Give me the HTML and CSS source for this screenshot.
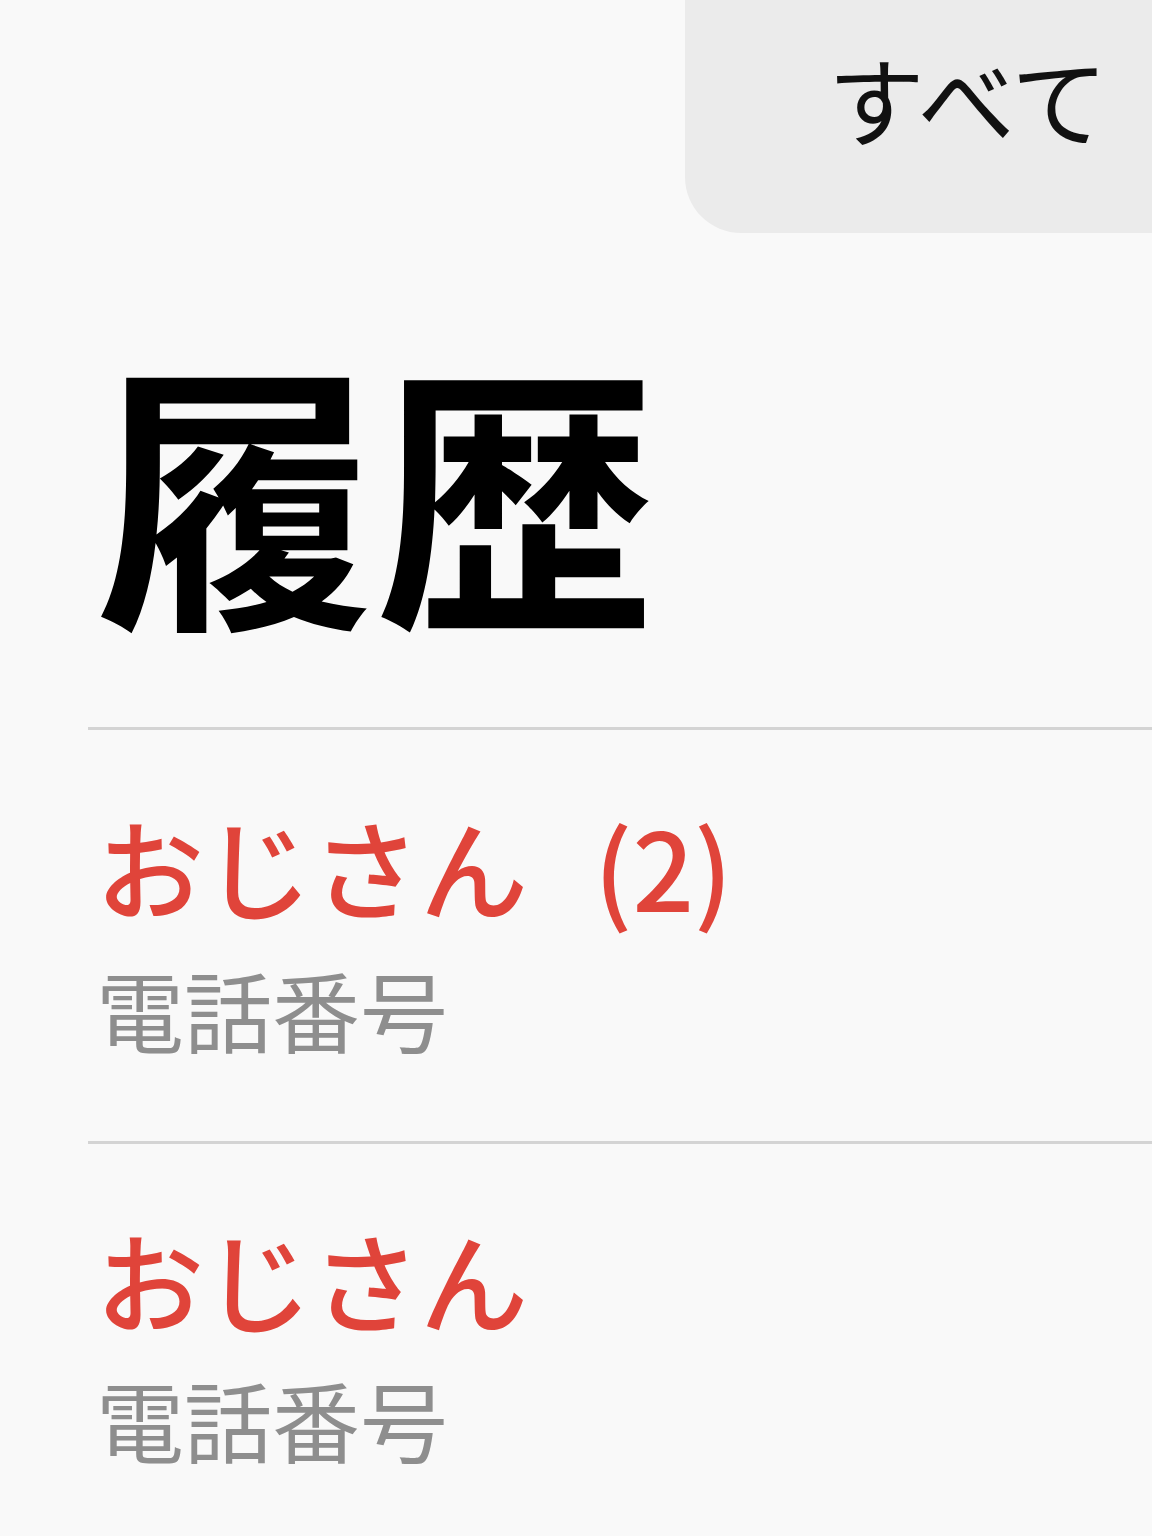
FILE: index.html
```html
<!DOCTYPE html>
<html lang="ja">
<head>
<meta charset="utf-8">
<link rel="stylesheet" href="styles.css">
</head>
<body>
<div class="topbar">
  <div class="filter">すべて</div>
</div>
<h1 class="title">履歴</h1>
<ul class="list">
  <li class="row">
    <div class="name">おじさん<span class="count">(2)</span></div>
    <div class="sub">電話番号</div>
  </li>
  <li class="row">
    <div class="name">おじさん</div>
    <div class="sub">電話番号</div>
  </li>
</ul>
</body>
</html>
```
FILE: styles.css
```css
html, body {
  margin: 0;
  padding: 0;
  background: #f9f9f9;
  font-family: "Noto Sans CJK JP", "Noto Sans", sans-serif;
}
.topbar {
  display: flex;
  justify-content: flex-end;
}
.filter {
  width: 467px;
  height: 233px;
  box-sizing: border-box;
  background: #ebebeb;
  border-bottom-left-radius: 56px;
  display: flex;
  align-items: center;
  justify-content: flex-end;
  padding-right: 44px;
  padding-bottom: 40px;
  font-size: 97px;
  line-height: 1;
  color: #111;
}
.title {
  margin: 113px 0 0 0;
  padding-left: 96px;
  font-size: 280px;
  line-height: 1;
  font-weight: 700;
  color: #000;
}
.list {
  list-style: none;
  margin: 101px 0 0 88px;
  padding: 0;
}
.row {
  border-top: 3px solid #d4d4d4;
  padding: 81px 0 89px 8px;
}
.row + .row {
  padding-top: 80px;
}
.name {
  font-size: 108px;
  line-height: 1;
  font-weight: 500;
  color: #e0443a;
}
.count {
  margin-left: 66px;
}
.sub {
  margin-top: 45px;
  font-size: 88px;
  line-height: 1;
  color: #8e8e8e;
}
.row + .row .sub {
  margin-top: 42px;
}
```
